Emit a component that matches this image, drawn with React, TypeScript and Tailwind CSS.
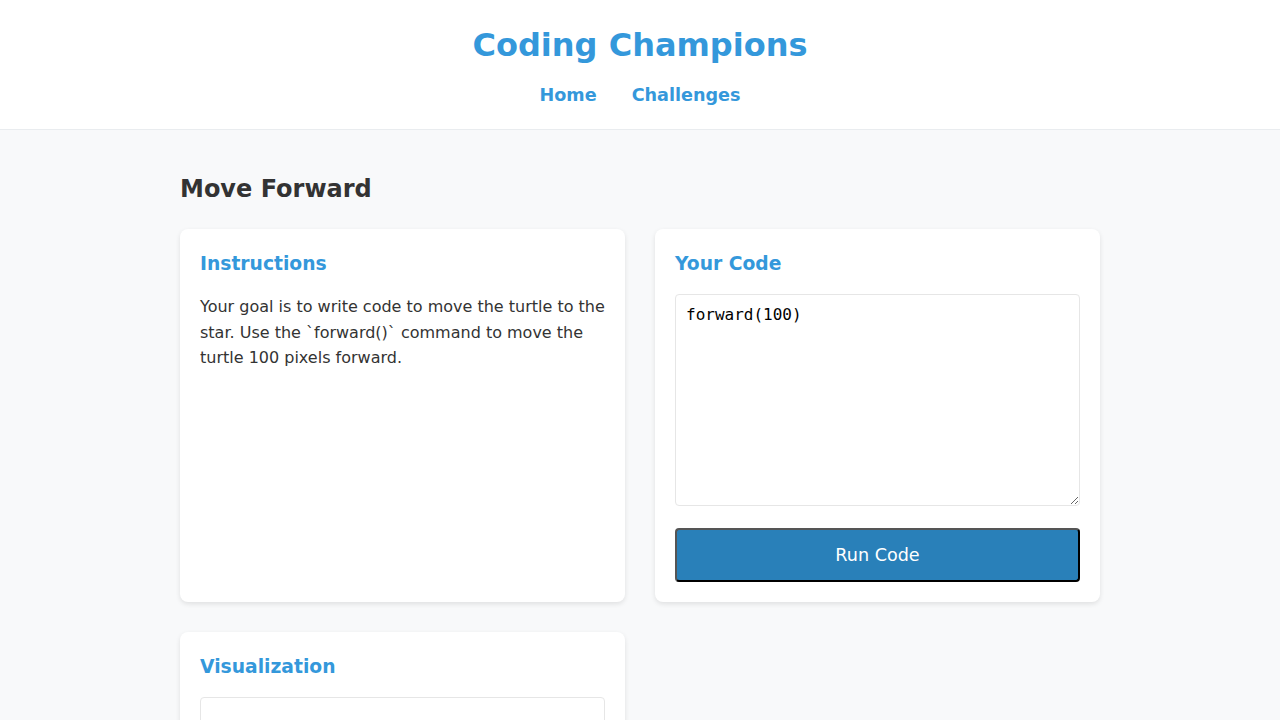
import { useState } from 'react';

const font = 'font-["DejaVu_Sans",_"Liberation_Sans",_sans-serif]';

const Card = ({ title, children }: { title: string; children: React.ReactNode }) => (
  <div className="bg-white rounded-lg p-5 shadow-[0_2px_5px_rgba(0,0,0,0.1)] flex flex-col">
    <h3 className="text-[18.72px] leading-[28px] font-bold text-[#3498db] mt-[1px] mb-[16px]">{title}</h3>
    {children}
  </div>
);

export default function App() {
  const [code, setCode] = useState('forward(100)');

  return (
    <div className={`min-h-screen bg-[#f8f9fa] text-[#333] ${font}`}>
      <header className="bg-white border-b border-[#e9ecef] h-[130px] flex flex-col items-center pt-[25px]">
        <h1 className="text-[32px] leading-[40px] font-bold text-[#3498db]">Coding Champions</h1>
        <nav className="flex gap-[35px] mt-[18px]">
          <a href="#" className="text-[17.6px] leading-[24px] font-bold text-[#3498db]">Home</a>
          <a href="#" className="text-[17.6px] leading-[24px] font-bold text-[#3498db]">Challenges</a>
        </nav>
      </header>

      <main className="max-w-[920px] mx-auto pt-[45px] pb-10">
        <h2 className="text-[24px] leading-[28px] font-bold text-[#333] mb-[26px]">Move Forward</h2>

        <div className="grid grid-cols-2 gap-[30px]">
          <Card title="Instructions">
            <p className="text-[16px] leading-[25.6px] text-[#333]">
              Your goal is to write code to move the turtle to the star. Use the `forward()` command to move the turtle 100 pixels forward.
            </p>
          </Card>

          <Card title="Your Code">
            <textarea
              value={code}
              onChange={e => setCode(e.target.value)}
              spellCheck={false}
              className='h-[212px] w-full border border-[#e6e6e6] rounded p-[10px] font-["DejaVu_Sans_Mono",_"Liberation_Mono",_monospace] text-[16px] leading-[20px] text-black resize-y outline-none'
            />
            <button className="mt-[22px] h-[54px] w-full bg-[#2980b9] text-white text-[17.6px] leading-[22px] rounded-[4px] border-2 border-t-[#555] border-l-[#555] border-b-black border-r-black">
              Run Code
            </button>
          </Card>

          <Card title="Visualization">
            <div className="h-[400px] border border-[#e6e6e6] rounded bg-white" />
          </Card>
        </div>
      </main>
    </div>
  );
}
